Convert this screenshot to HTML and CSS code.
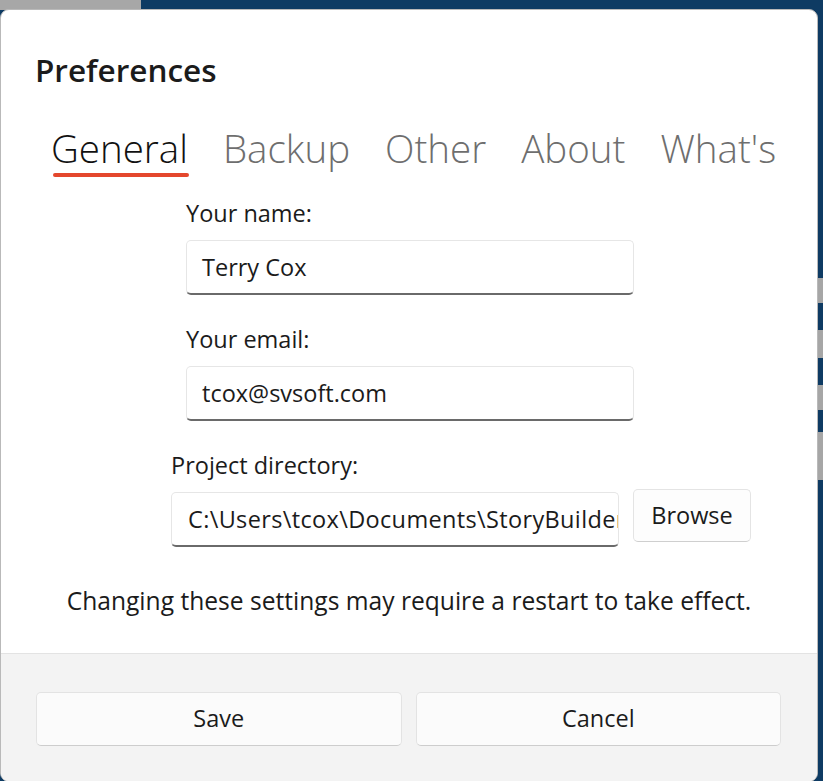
FILE: index.html
```html
<!DOCTYPE html>
<html>
<head>
<meta charset="utf-8">
<link rel="stylesheet" href="styles.css">
</head>
<body>
<div class="dialog">
  <div class="content">
    <h1 class="title">Preferences</h1>
    <div class="tabs">
      <div class="tab active">General</div>
      <div class="tab">Backup</div>
      <div class="tab">Other</div>
      <div class="tab">About</div>
      <div class="tab">What's</div>
    </div>
    <div class="form">
      <div class="field name-field">
        <label class="label">Your name:</label>
        <div class="input">Terry Cox</div>
      </div>
      <div class="field email-field">
        <label class="label">Your email:</label>
        <div class="input">tcox@svsoft.com</div>
      </div>
      <div class="field dir-field">
        <label class="label">Project directory:</label>
        <div class="dir-row">
          <div class="input dir-input">C:\Users\tcox\Documents\StoryBuilder</div>
          <div class="browse">Browse</div>
        </div>
      </div>
      <p class="note">Changing these settings may require a restart to take effect.</p>
    </div>
  </div>
  <div class="footer">
    <div class="btn">Save</div>
    <div class="btn">Cancel</div>
  </div>
</div>
</body>
</html>
```
FILE: styles.css
```css
html, body {
  margin: 0;
  padding: 0;
  width: 823px;
  height: 781px;
  overflow: hidden;
}
body {
  font-family: "Open Sans", "Noto Sans", sans-serif;
  color: #1b1b1b;
  background-color: #0e3b63;
  background-image:
    linear-gradient(to bottom,
      #0e3b63 0, #0e3b63 278px,
      #a6a6a6 278px, #a6a6a6 303px,
      #0e3b63 303px, #0e3b63 330px,
      #a6a6a6 330px, #a6a6a6 358px,
      #0e3b63 358px, #0e3b63 385px,
      #a6a6a6 385px, #a6a6a6 410px,
      #0e3b63 410px, #0e3b63 432px,
      #a6a6a6 432px, #a6a6a6 480px,
      #0e3b63 480px),
    linear-gradient(to right, #a7a7a7 0, #a7a7a7 141px, #0e3b63 141px);
  background-size: 5px 100%, 100% 10px;
  background-position: right top, left top;
  background-repeat: no-repeat;
}
.dialog {
  margin-top: 9px;
  width: 818px;
  height: 773px;
  background: #ffffff;
  border: 1px solid #b9b9b9;
  border-radius: 9px;
  overflow: hidden;
  display: flex;
  flex-direction: column;
  box-sizing: border-box;
}
.content {
  flex: 1;
  padding: 0 0 0 34px;
}
.title {
  margin: 40px 0 0 0;
  font-size: 31.5px;
  font-weight: 600;
  line-height: 40px;
}
.tabs {
  display: flex;
  gap: 35px;
  margin: 33px 0 0 16px;
  white-space: nowrap;
}
.tab {
  font-size: 38.5px;
  font-weight: 300;
  color: #6e6e6e;
  line-height: 50px;
  padding-bottom: 4px;
  position: relative;
}
.tab.active {
  color: #111111;
}
.tab.active::after {
  content: "";
  position: absolute;
  left: 2px;
  right: -1px;
  bottom: 0;
  height: 4px;
  border-radius: 2px;
  background: #e4472d;
}
.form {
  display: flex;
  flex-direction: column;
  margin-top: 21px;
}
.field {
  display: flex;
  flex-direction: column;
}
.name-field, .email-field {
  margin-left: 151px;
  width: 448px;
}
.email-field {
  margin-top: 29px;
}
.dir-field {
  margin-left: 136px;
  margin-top: 29px;
}
.label {
  font-size: 23.5px;
  line-height: 30px;
  margin-bottom: 12px;
}
.input {
  box-sizing: border-box;
  height: 55px;
  border: 1px solid #e6e6e6;
  border-bottom: 2px solid #6a6a6a;
  border-radius: 5px;
  padding: 0 15px;
  font-size: 23.5px;
  line-height: 52px;
  white-space: nowrap;
  overflow: hidden;
}
.dir-row {
  display: flex;
  align-items: flex-start;
  gap: 14px;
  margin-top: -3px;
}
.dir-input {
  width: 448px;
  margin-top: 3px;
  padding: 0 0 0 16px;
  letter-spacing: 0.35px;
}
.browse {
  box-sizing: border-box;
  width: 118px;
  height: 53px;
  border: 1px solid #e4e4e4;
  border-bottom-color: #cfcfcf;
  border-radius: 5px;
  background: #fdfdfd;
  font-size: 23.5px;
  line-height: 50px;
  text-align: center;
}
.note {
  margin: 39px 34px 0 0;
  font-size: 24.6px;
  line-height: 30px;
  text-align: center;
}
.footer {
  height: 128px;
  flex: none;
  background: #f3f3f3;
  border-top: 1px solid #e3e3e3;
  display: flex;
  gap: 14px;
  padding: 38px 36px 0 35px;
  box-sizing: border-box;
}
.btn {
  flex: 1;
  box-sizing: border-box;
  height: 54px;
  border: 1px solid #e3e3e3;
  border-bottom-color: #cdcdcd;
  border-radius: 5px;
  background: #fbfbfb;
  font-size: 23.5px;
  line-height: 51px;
  text-align: center;
}
```
